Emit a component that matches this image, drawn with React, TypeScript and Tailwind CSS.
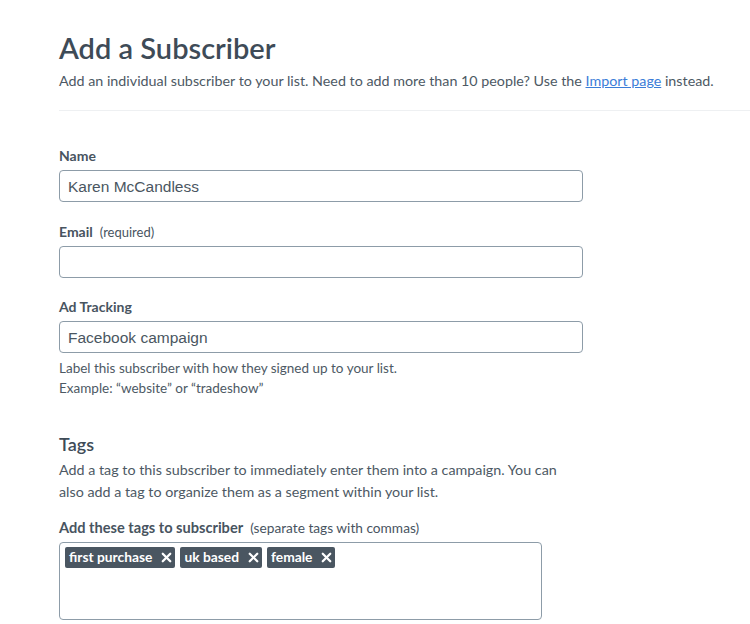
import { X } from 'lucide-react'

const TAGS = ['first purchase', 'uk based', 'female']

function Field({
  label,
  note,
  value,
}: {
  label: string
  note?: string
  value?: string
}) {
  return (
    <div>
      <label className="block text-[14px] font-bold leading-[20px] text-[#48545f]">
        {label}
        {note && <span className="ml-[7px] text-[13px] font-normal">{note}</span>}
      </label>
      <div className="mt-1 flex h-[32px] w-[524px] items-center rounded-[4px] border border-[#8d9ca8] bg-white px-2 pt-[2px] font-['Liberation_Sans',Arial,sans-serif] text-[15.5px] text-[#4a5661]">
        {value}
      </div>
    </div>
  )
}

export default function App() {
  return (
    <div className="min-h-screen bg-white pt-[31px] pl-[59px] font-['Lato',sans-serif] text-[#4d5964]">
      <h1 className="text-[29px] font-semibold leading-[34px] text-[#3e4b57]">Add a Subscriber</h1>
      <p className="mt-[5px] text-[14.3px] leading-[22px]">
        Add an individual subscriber to your list. Need to add more than 10 people? Use the{' '}
        <a href="#" className="text-[#3b7dd8] underline">
          Import page
        </a>{' '}
        instead.
      </p>
      <div className="mt-[18px] h-px bg-[#eef0f2]" />

      <div className="mt-[35px] flex flex-col gap-[19.5px]">
        <Field label="Name" value="Karen McCandless" />
        <Field label="Email" note="(required)" />
        <div>
          <Field label="Ad Tracking" value="Facebook campaign" />
          <p className="mt-[5px] text-[13.5px] leading-[20px]">
            Label this subscriber with how they signed up to your list.
            <br />
            Example: “website” or “tradeshow”
          </p>
        </div>
      </div>

      <h2 className="mt-[34px] text-[18px] font-semibold leading-[24px] text-[#3e4b57]">Tags</h2>
      <p className="mt-[3px] w-[510px] text-[14.3px] leading-[22px]">
        Add a tag to this subscriber to immediately enter them into a campaign. You can also add a tag to
        organize them as a segment within your list.
      </p>

      <label className="mt-[15px] block text-[14.6px] font-bold leading-[20px] text-[#48545f]">
        Add these tags to subscriber
        <span className="ml-[7px] text-[13.7px] font-normal">(separate tags with commas)</span>
      </label>
      <div className="mt-1 flex h-[78px] w-[483px] items-start gap-[5px] rounded-[4px] border border-[#8d9ca8] bg-white px-[5px] pt-[4px]">
        {TAGS.map(tag => (
          <span
            key={tag}
            className="flex h-[21px] items-center gap-[7px] rounded-[2px] bg-[#4a5661] pl-[4px] pr-[1px] text-[13.8px] font-bold text-white"
          >
            {tag}
            <X className="h-[15px] w-[15px]" strokeWidth={3.6} />
          </span>
        ))}
      </div>
    </div>
  )
}
